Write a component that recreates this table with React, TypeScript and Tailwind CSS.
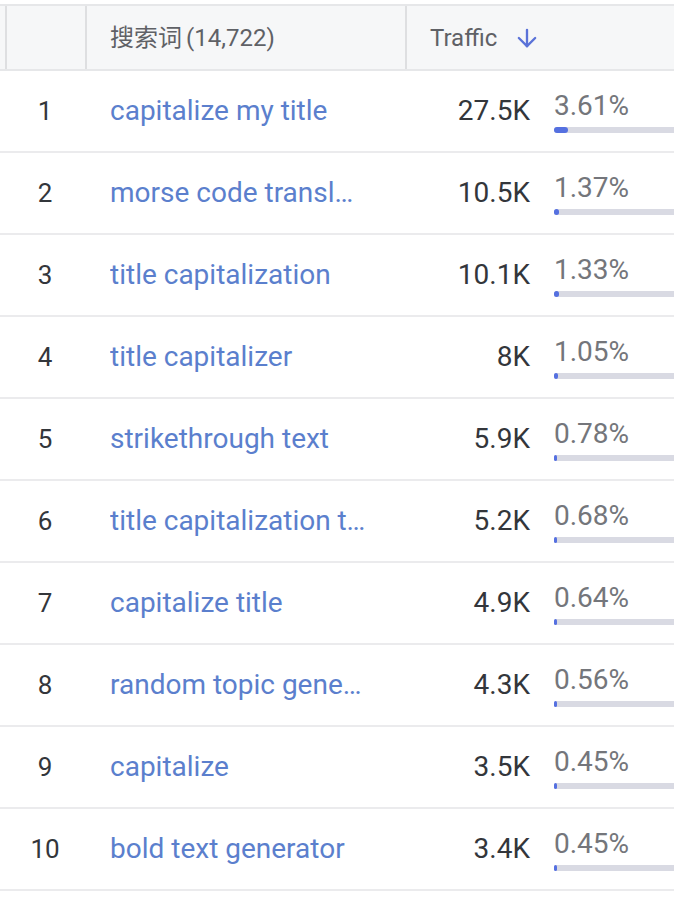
import { ArrowDown } from "lucide-react";

const rows = [
  { rank: 1, keyword: "capitalize my title", traffic: "27.5K", share: 3.61 },
  { rank: 2, keyword: "morse code translator", traffic: "10.5K", share: 1.37 },
  { rank: 3, keyword: "title capitalization", traffic: "10.1K", share: 1.33 },
  { rank: 4, keyword: "title capitalizer", traffic: "8K", share: 1.05 },
  { rank: 5, keyword: "strikethrough text", traffic: "5.9K", share: 0.78 },
  { rank: 6, keyword: "title capitalization tool", traffic: "5.2K", share: 0.68 },
  { rank: 7, keyword: "capitalize title", traffic: "4.9K", share: 0.64 },
  { rank: 8, keyword: "random topic generator", traffic: "4.3K", share: 0.56 },
  { rank: 9, keyword: "capitalize", traffic: "3.5K", share: 0.45 },
  { rank: 10, keyword: "bold text generator", traffic: "3.4K", share: 0.45 },
];

export default function App() {
  return (
    <div
      className="h-[905px] w-[674px] overflow-hidden bg-white pt-1"
      style={{ fontFamily: "Roboto, 'Noto Sans CJK SC', sans-serif" }}
    >
      <div className="flex h-[67px] w-[900px] border-y-2 border-[#e6e7e9] bg-[#f6f7f8] text-[24px] text-[#5f6166]">
        <div className="w-[5px] shrink-0" />
        <div className="w-[80px] shrink-0 border-l-2 border-[#dedfe1]" />
        <div className="flex w-[320px] shrink-0 items-center border-l-2 border-[#dedfe1] pl-[23px]">
          <span>搜索词</span>
          <span className="ml-1">(14,722)</span>
        </div>
        <div className="flex flex-1 items-center gap-4 border-l-2 border-[#dedfe1] pl-[23px]">
          <span>Traffic</span>
          <ArrowDown className="h-7 w-7 text-[#5a72d8]" strokeWidth={2} />
        </div>
      </div>

      {rows.map((row) => (
        <div
          key={row.rank}
          className="flex h-[82px] w-[900px] items-center border-b-2 border-[#ebebed]"
        >
          <div className="w-[5px] shrink-0" />
          <div className="w-[80px] shrink-0 text-center text-[26px] text-[#33363b]">
            {row.rank}
          </div>
          <div className="w-[320px] shrink-0 pl-[25px]">
            <div className="max-w-[256px] truncate text-[28px] text-[#5b7fcd]">
              {row.keyword}
            </div>
          </div>
          <div className="w-[125px] shrink-0 text-right text-[28px] text-[#33363b]">
            {row.traffic}
          </div>
          <div className="ml-[24px] w-[400px] shrink-0">
            <div className="text-[28px] leading-8 text-[#74767b]">
              {row.share.toFixed(2)}%
            </div>
            <div className="mt-[5px] h-[6px] w-full rounded-full bg-[#d9dae3]">
              <div
                className="h-full rounded-full bg-[#5570e0]"
                style={{ width: `${Math.max(row.share * 4, 3)}px` }}
              />
            </div>
          </div>
        </div>
      ))}
    </div>
  );
}
